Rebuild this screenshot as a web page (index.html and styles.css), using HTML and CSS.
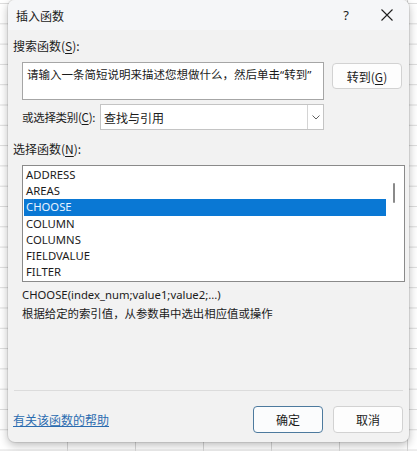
FILE: index.html
```html
<!DOCTYPE html>
<html lang="zh-CN">
<head>
<meta charset="utf-8">
<title>插入函数</title>
<link rel="stylesheet" href="styles.css">
</head>
<body>
<div class="sheet">
  <div class="dialog">
    <div class="titlebar">
      <span class="title">插入函数</span>
      <span class="help">?</span>
      <span class="close">
        <svg width="12" height="12" viewBox="0 0 12 12"><path d="M0.5 0.5 L11.5 11.5 M11.5 0.5 L0.5 11.5" stroke="#1f1f1f" stroke-width="1.1" fill="none"/></svg>
      </span>
    </div>
    <div class="body">
      <div class="label">搜索函数(<u>S</u>):</div>
      <div class="search-row">
        <div class="search-box">请输入一条简短说明来描述您想做什么，然后单击“转到”</div>
        <div class="btn goto">转到(<u>G</u>)</div>
      </div>
      <div class="cat-row">
        <span class="cat-label">或选择类别(<u>C</u>):</span>
        <div class="select">
          <span class="select-text">查找与引用</span>
          <span class="select-arrow">
            <svg width="8" height="5" viewBox="0 0 8 5"><path d="M0.5 0.5 L4 4 L7.5 0.5" stroke="#606060" stroke-width="1" fill="none"/></svg>
          </span>
        </div>
      </div>
      <div class="label label-fn">选择函数(<u>N</u>):</div>
      <div class="listbox">
        <ul class="items">
          <li>ADDRESS</li>
          <li>AREAS</li>
          <li class="sel">CHOOSE</li>
          <li>COLUMN</li>
          <li>COLUMNS</li>
          <li>FIELDVALUE</li>
          <li>FILTER</li>
        </ul>
        <div class="scroll"><div class="thumb"></div></div>
      </div>
      <div class="sig">CHOOSE(index_num;value1;value2;...)</div>
      <div class="desc">根据给定的索引值，从参数串中选出相应值或操作</div>
      <div class="spacer"></div>
      <div class="sep"></div>
      <div class="footer">
        <span class="link">有关该函数的帮助</span>
        <div class="buttons">
          <div class="btn ok">确定</div>
          <div class="btn cancel">取消</div>
        </div>
      </div>
    </div>
  </div>
</div>
</body>
</html>
```
FILE: styles.css
```css
html, body {
  margin: 0;
  padding: 0;
}
body {
  width: 417px;
  height: 451px;
  overflow: hidden;
  font-family: "Noto Sans", "Noto Sans CJK SC", sans-serif;
  color: #1b1b1b;
}
.sheet {
  width: 417px;
  height: 451px;
  background-color: #ffffff;
  background-image:
    linear-gradient(to right, transparent 67px, #d6d6d6 67px, #d6d6d6 68px, transparent 68px),
    linear-gradient(to bottom, transparent 19px, #dcdcdc 19px, #dcdcdc 20px, transparent 20px);
  background-size: 68px 451px, 417px 20.3px;
  background-position: 0 0, 0 4px;
  padding-left: 8px;
  box-sizing: border-box;
}
.dialog {
  width: 401px;
  height: 442px;
  background: #f2f2f2;
  border-radius: 7px;
  box-shadow: 0 3px 10px rgba(0,0,0,0.28), 0 0 0 1px rgba(0,0,0,0.08);
  display: flex;
  flex-direction: column;
  overflow: hidden;
}
.titlebar {
  height: 30px;
  flex: none;
  display: flex;
  align-items: center;
  background: #f5f6f8;
  font-family: "Noto Sans CJK SC", sans-serif;
  font-size: 12px;
}
.title {
  margin-left: 8px;
  flex: 1;
}
.help {
  font-family: "Noto Sans", sans-serif;
  font-size: 13px;
  width: 12px;
  text-align: center;
  margin-right: 29px;
}
.close {
  display: flex;
  margin-right: 16px;
}
.body {
  flex: 1;
  display: flex;
  flex-direction: column;
  padding: 0 5px;
  font-family: "Noto Sans CJK SC", sans-serif;
  font-size: 12px;
}
u {
  text-decoration: underline;
  text-underline-offset: 2px;
}
.label {
  height: 16px;
  line-height: 16px;
  margin-top: 8px;
  white-space: nowrap;
}
.search-row {
  display: flex;
  align-items: flex-start;
  margin-top: 8px;
  margin-left: 9px;
}
.search-box {
  width: 302px;
  height: 38px;
  box-sizing: border-box;
  background: #ffffff;
  border: 1px solid #a6a6a6;
  padding: 4px 4px;
  line-height: 16px;
  font-family: "Noto Sans", "Noto Sans CJK SC", sans-serif;
  font-size: 11.5px;
  white-space: nowrap;
  overflow: hidden;
}
.btn {
  box-sizing: border-box;
  width: 70px;
  height: 27px;
  display: flex;
  align-items: center;
  justify-content: center;
  background: #fdfdfd;
  border: 1px solid #d2d2d2;
  border-radius: 4px;
  font-size: 12px;
}
.goto {
  margin-left: 8px;
  margin-top: 1px;
  height: 26px;
}
.cat-row {
  display: flex;
  align-items: center;
  margin-top: 4px;
  margin-left: 9px;
  height: 26px;
}
.cat-label {
  width: 78px;
  flex: none;
  white-space: nowrap;
  font-size: 11.5px;
  letter-spacing: -0.3px;
}
.select {
  width: 224px;
  height: 26px;
  box-sizing: border-box;
  background: #ffffff;
  border: 1px solid #c4c4c4;
  display: flex;
  align-items: center;
}
.select-text {
  flex: 1;
  padding-left: 3px;
}
.select-arrow {
  width: 16px;
  height: 24px;
  box-sizing: border-box;
  border-left: 1px solid #d4d4d4;
  display: flex;
  align-items: center;
  justify-content: center;
}
.label-fn {
  margin-top: 11px;
}
.listbox {
  margin-top: 8px;
  margin-left: 9px;
  width: 383px;
  height: 117px;
  box-sizing: border-box;
  background: #ffffff;
  border: 1px solid #8a8a8a;
  display: flex;
  padding: 1px 1px 1px 1px;
}
.items {
  list-style: none;
  margin: 0;
  padding: 0;
  flex: 1;
  font-family: "Noto Sans", sans-serif;
  font-size: 11.3px;
}
.items li {
  height: 16.2px;
  line-height: 16.2px;
  padding-left: 2px;
}
.items li.sel {
  background: #0a78d4;
  color: #e8f3ff;
}
.scroll {
  width: 17px;
  position: relative;
  background: #ffffff;
}
.thumb {
  position: absolute;
  left: 7px;
  top: 16px;
  width: 2px;
  height: 20px;
  background: #8a8a8a;
  border-radius: 1px;
}
.sig {
  margin-top: 4px;
  margin-left: 9px;
  height: 18px;
  line-height: 18px;
  font-family: "Noto Sans", sans-serif;
  font-size: 11.3px;
}
.desc {
  margin-left: 9px;
  height: 19px;
  line-height: 19px;
  font-size: 11.4px;
}
.spacer {
  flex: 1;
}
.sep {
  height: 1px;
  background: #dcdcdc;
  margin: 0 0 0 1px;
  width: 389px;
}
.footer {
  height: 51px;
  display: flex;
  align-items: flex-start;
  justify-content: space-between;
  padding-top: 15px;
  box-sizing: border-box;
}
.link {
  color: #2b6cb0;
  text-decoration: underline;
  margin-top: 5px;
}
.buttons {
  display: flex;
  gap: 10px;
  margin-right: 1px;
}
.ok {
  border: 1px solid #4d7a9e;
  background: #fbfcfd;
}
```
